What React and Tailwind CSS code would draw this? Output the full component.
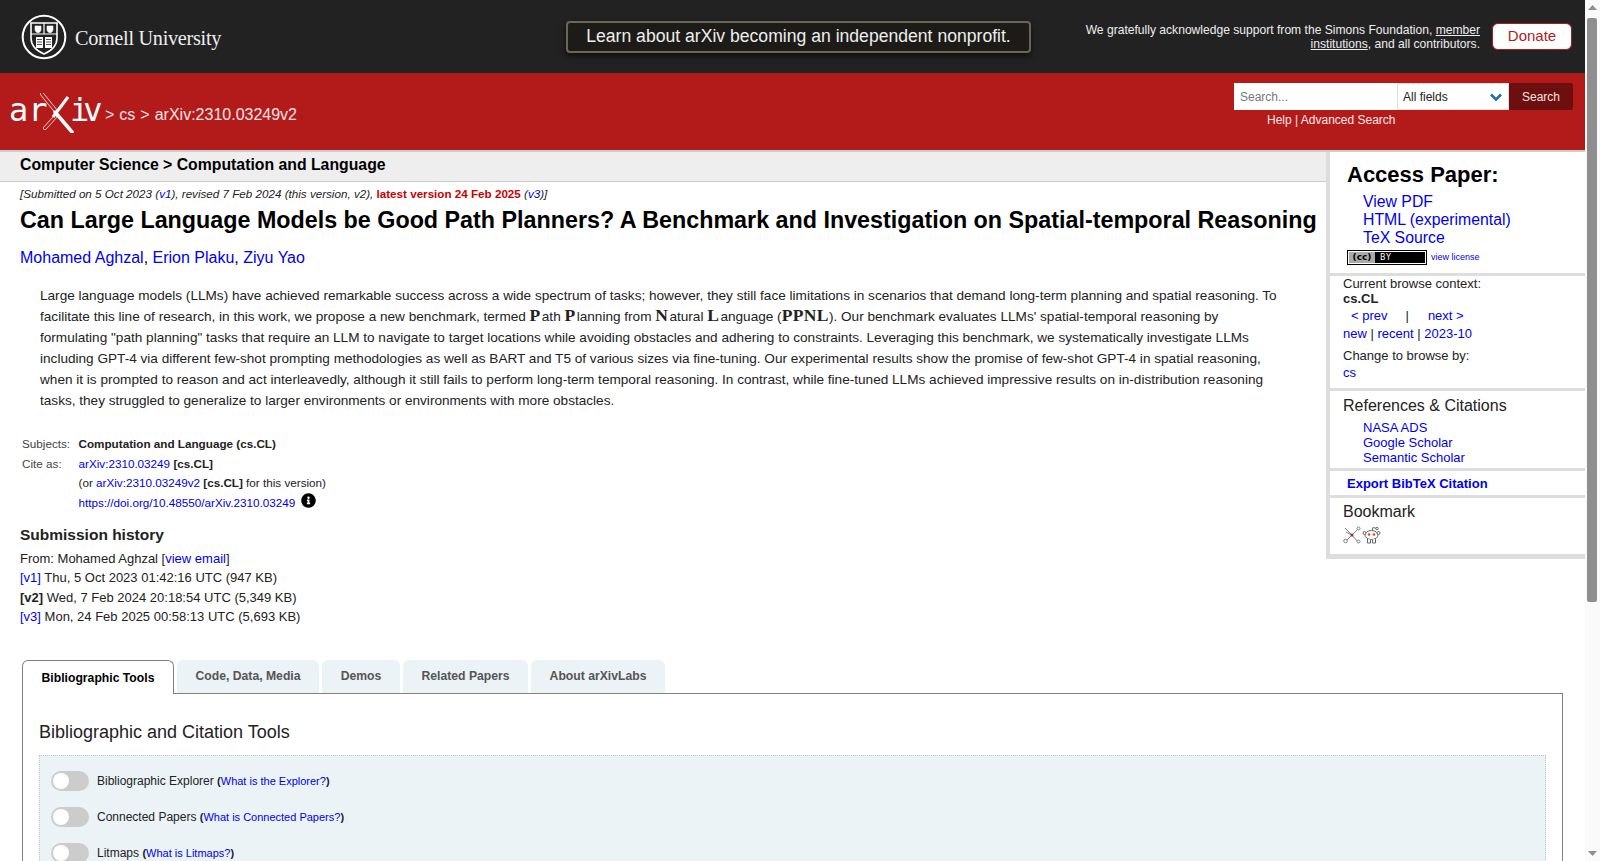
import React from "react";
import { FaInfoCircle } from "react-icons/fa";

const Link = ({ children, className = "" }) => (
  <a href="#" className={`text-[#0000ee] ${className}`}>{children}</a>
);

const CornellSeal = () => (
  <svg width="46" height="46" viewBox="0 0 46 46" fill="none" stroke="#fff">
    <circle cx="23" cy="23" r="21.3" strokeWidth="2" />
    <path d="M10 9h26v15c0 8-6 13-13 16-7-3-13-8-13-16z" strokeWidth="1.6" />
    <path d="M10 20h26M23 9v11" strokeWidth="1.2" />
    <path d="M14 12h6v3.500c0 2-1.500 3-3 3.300-1.500-.3-3-1.300-3-3.300zM26 12h6v3.500c0 2-1.500 3-3 3.300-1.500-.3-3-1.300-3-3.300z" fill="#fff" strokeWidth=".6" />
    <path d="M15 23h7v11h-7zM24 23h7v11h-7z" fill="#fff" stroke="none" />
    <path d="M16 25.500h5M16 28h5M16 30.500h5M25 25.500h5M25 28h5M25 30.500h5" stroke="#222" strokeWidth=".8" />
  </svg>
);

const ArxivLogo = () => (
  <div className="relative h-[40px] w-[90px] shrink-0 text-white">
    <span className="absolute -left-[1px] top-0 font-['DejaVu_Sans_Mono',monospace] text-[32px] leading-[34px]">ar</span>
    <span className="absolute left-[60px] top-0 font-['DejaVu_Sans_Mono',monospace] text-[32px] leading-[34px] tracking-[-6px]">iv</span>
    <svg className="absolute left-0 top-0" width="90" height="40" viewBox="0 0 90 40" fill="none">
      <path d="M32 1l13 16M45 24L35 35" stroke="#f0c9c9" strokeWidth="4" strokeLinecap="round" />
      <path d="M32 1l13 16M45 24L35 35" stroke="#b31b1b" strokeWidth="2.400" strokeLinecap="round" />
      <path d="M45 19l17 20" stroke="#fff" strokeWidth="3.500" strokeLinecap="round" />
      <path d="M58 4L43 24" stroke="#fff" strokeWidth="3" />
    </svg>
  </div>
);

const CcBadge = () => (
  <div className="h-[15px] w-[80px] border border-black bg-white p-[1px] font-['DejaVu_Sans',sans-serif]">
    <div className="flex h-full items-center bg-black">
      <span className="flex h-full w-[26px] items-center justify-center bg-[#aaa] text-[9px] font-bold leading-none text-black">(cc)</span>
      <span className="pl-[5px] text-[8px] leading-none tracking-[1px] text-white">BY</span>
    </div>
  </div>
);

const BookmarkIcons = () => (
  <div className="mt-[5px] flex gap-[1px]">
    <svg width="18" height="18" viewBox="0 0 18 18" fill="none" stroke="#777" strokeWidth=".9">
      <path d="M2 2l7 7 7-7M9 9l-5 5M9 9l6 7M9 9L3 6" />
      <circle cx="15.500" cy="2.500" r="1.500" fill="#fff" />
      <circle cx="2.500" cy="15" r="1.800" fill="#fff" />
      <circle cx="15.500" cy="15.500" r="1.500" fill="#fff" />
      <circle cx="9" cy="9" r="1.500" fill="#a3224d" stroke="none" />
    </svg>
    <svg width="19" height="19" viewBox="0 0 19 19" fill="none" stroke="#666" strokeWidth="1">
      <path d="M10 5l1-3.500 3 .8" />
      <circle cx="15" cy="2.500" r="1.200" />
      <ellipse cx="9.500" cy="9" rx="6.500" ry="4.500" fill="#fff" />
      <circle cx="2.500" cy="7" r="1.500" fill="#fff" />
      <circle cx="16.500" cy="7" r="1.500" fill="#fff" />
      <path d="M5.500 13v4h3v-3.500M13.500 13v4h-3v-3.500" fill="#fff" />
      <circle cx="7" cy="8.500" r="1.300" fill="#f0441c" stroke="none" />
      <circle cx="12" cy="8.500" r="1.300" fill="#f0441c" stroke="none" />
    </svg>
  </div>
);

const Toggle = () => (
  <div className="flex h-[20px] w-[38px] shrink-0 items-center rounded-full bg-[#ccc] pl-[2px]">
    <div className="h-[16px] w-[16px] rounded-full bg-white" />
  </div>
);

const ToolRow = ({ label, link }) => (
  <div className="flex h-[36px] items-center gap-[8px] text-[12px] text-[#222]">
    <Toggle />
    <span>
      {label} <span className="text-[11px] font-bold">(<Link className="font-normal">{link}</Link>)</span>
    </span>
  </div>
);

const Scrollbar = () => (
  <div className="flex h-full w-[15px] shrink-0 flex-col items-center bg-[#fafafa] pr-[1px]">
    <svg className="mt-[5px] shrink-0" width="9" height="5" viewBox="0 0 9 5"><path d="M4.500 0L9 5H0z" fill="#8f8f8f" /></svg>
    <div className="mt-[8px] h-[584px] w-[10px] shrink-0 rounded-[2px] bg-[#8f8f8f]" />
    <div className="flex-1" />
    <svg className="mb-[5px] shrink-0" width="9" height="5" viewBox="0 0 9 5"><path d="M0 0h9L4.500 5z" fill="#8f8f8f" /></svg>
  </div>
);

const MathLetter = ({ children, className = "" }) => (
  <span className={`font-['Liberation_Serif',serif] text-[17.500px] leading-none font-bold ${className}`}>{children}</span>
);

export default function App() {
  return (
    <div className="flex h-[861px] overflow-hidden bg-white font-['Liberation_Sans',Arial,sans-serif] text-black">
      <div className="min-w-0 flex-1">
        {/* cornell banner */}
        <header className="flex h-[73px] items-center bg-[#222] text-white">
          <div className="flex w-[566px] shrink-0 items-center pl-[21px]">
            <CornellSeal />
            <span className="mt-[3px] ml-[8px] font-['Liberation_Serif',serif] text-[20.300px] tracking-[-0.3px] text-[#eee]">Cornell University</span>
          </div>
          <div className="flex h-[32px] w-[465px] shrink-0 items-center justify-center rounded-[4px] border-2 border-[#6b6658] bg-[#1c1b18] text-[17.600px] text-[#eee] shadow-[0_3px_6px_rgba(0,0,0,0.6)]">
            Learn about arXiv becoming an independent nonprofit.
          </div>
          <p className="ml-auto w-[420px] text-right text-[12.100px] leading-[14px] text-[#eee]">
            We gratefully acknowledge support from the Simons Foundation, <span className="underline">member institutions</span>, and all contributors.
          </p>
          <div className="mr-[13px] ml-[12px] flex h-[27px] w-[80px] items-center justify-center rounded-[6px] border border-[#b31b1b] bg-white text-[15px] text-[#b31b1b]">Donate</div>
        </header>

        {/* red bar */}
        <div className="flex h-[79px] border-b-2 border-[#ccc] bg-[#b31b1b] text-white">
          <div className="flex items-start pt-[20px] pl-[10px]">
            <ArxivLogo />
            <div className="mt-[13px] ml-[5px] flex gap-[5px] text-[16px] leading-[18px] text-[#f2e4e4]">
              <span>&gt;</span><span>cs</span><span>&gt;</span><span>arXiv:2310.03249v2</span>
            </div>
          </div>
          <div className="ml-auto mr-[12px] pt-[10px]">
            <div className="flex h-[27px] text-[12px]">
              <div className="flex w-[163px] items-center bg-white pl-[6px] text-[#777]">Search...</div>
              <div className="flex w-[112px] items-center justify-between border border-[#ddd] bg-white pr-[6px] pl-[5px] text-[#222]">
                All fields
                <svg width="12" height="8" viewBox="0 0 12 8" fill="none"><path d="M1 1.500l5 5 5-5" stroke="#1c6ca8" strokeWidth="2.500" /></svg>
              </div>
              <div className="flex w-[64px] items-center justify-center rounded-r-[2px] bg-[#6e0f0f] text-[#f2e4e4]">Search</div>
            </div>
            <div className="mt-[3px] pl-[33px] text-[12px] leading-[14px] text-[#f5e8e8]">
              Help | Advanced Search
            </div>
          </div>
        </div>

        <div className="flex items-start">
          {/* left column */}
          <main className="w-[1326px] shrink-0">
            <div className="flex h-[30px] items-center border-b border-[#ccc] bg-[#eee] pb-[4px] pl-[20px] text-[15.800px] font-bold">
              Computer Science &gt; Computation and Language
            </div>
            <div className="pl-[20px]">
              <p className="mt-[5px] text-[11.650px] leading-[14px] italic text-[#222]">
                [Submitted on 5 Oct 2023 (<Link>v1</Link>), revised 7 Feb 2024 (this version, v2), <span className="font-bold not-italic text-[#c00]">latest version 24 Feb 2025</span> (<Link>v3</Link>)]
              </p>
              <h1 className="mt-[5px] whitespace-nowrap text-[23.300px] leading-[29px] font-bold">
                Can Large Language Models be Good Path Planners? A Benchmark and Investigation on Spatial-temporal Reasoning
              </h1>
              <p className="mt-[14px] text-[16px] leading-[18px]">
                <Link>Mohamed Aghzal</Link>, <Link>Erion Plaku</Link>, <Link>Ziyu Yao</Link>
              </p>
              <p className="mt-[18px] ml-[20px] w-[1240px] text-[13.600px] leading-[21px] text-[#222]">
                Large language models (LLMs) have achieved remarkable success across a wide spectrum of tasks; however, they still face limitations in scenarios that demand long-term planning and spatial reasoning. To facilitate this line of research, in this work, we propose a new benchmark, termed <MathLetter className="mr-[1.500px]">P</MathLetter>ath <MathLetter className="mr-[1.500px]">P</MathLetter>lanning from <MathLetter className="mr-[1.500px]">N</MathLetter>atural <MathLetter className="mr-[1.500px]">L</MathLetter>anguage (<MathLetter className="tracking-[0.4px]">PPNL</MathLetter>). Our benchmark evaluates LLMs' spatial-temporal reasoning by formulating "path planning" tasks that require an LLM to navigate to target locations while avoiding obstacles and adhering to constraints. Leveraging this benchmark, we systematically investigate LLMs including GPT-4 via different few-shot prompting methodologies as well as BART and T5 of various sizes via fine-tuning. Our experimental results show the promise of few-shot GPT-4 in spatial reasoning, when it is prompted to reason and act interleavedly, although it still fails to perform long-term temporal reasoning. In contrast, while fine-tuned LLMs achieved impressive results on in-distribution reasoning tasks, they struggled to generalize to larger environments or environments with more obstacles.
              </p>

              {/* metadata */}
              <div className="mt-[23px] ml-[2px] grid grid-cols-[56.500px_1fr] text-[11.700px] leading-[19.500px] text-[#222]">
                <span className="text-[#444]">Subjects:</span>
                <span className="font-bold">Computation and Language (cs.CL)</span>
                <span className="text-[#444]">Cite as:</span>
                <span><Link>arXiv:2310.03249</Link> <b>[cs.CL]</b></span>
                <span />
                <span>(or <Link>arXiv:2310.03249v2</Link> <b>[cs.CL]</b> for this version)</span>
                <span />
                <span className="flex items-center">
                  <Link>https://doi.org/10.48550/arXiv.2310.03249</Link>
                  <FaInfoCircle className="relative -top-[2px] ml-[6px] text-[15px] text-black" />
                </span>
              </div>

              <h2 className="mt-[14px] text-[15.500px] leading-[18px] font-bold text-[#222]">Submission history</h2>
              <div className="mt-[5px] text-[13px] leading-[19.330px] text-[#222]">
                <div>From: Mohamed Aghzal [<Link>view email</Link>]</div>
                <div><Link>[v1]</Link> Thu, 5 Oct 2023 01:42:16 UTC (947 KB)</div>
                <div><b>[v2]</b> Wed, 7 Feb 2024 20:18:54 UTC (5,349 KB)</div>
                <div><Link>[v3]</Link> Mon, 24 Feb 2025 00:58:13 UTC (5,693 KB)</div>
              </div>
            </div>
          </main>

          {/* sidebar */}
          <aside className="w-[259px] shrink-0 border-b-[5px] border-l-4 border-[#ddd] text-[13px] leading-[15px]">
            <section className="h-[124px] border-b-[3px] border-[#ddd] pt-[9px] pl-[17px]">
              <h2 className="text-[22px] leading-[27px] font-bold">Access Paper:</h2>
              <ul className="mt-[5px] pl-[16px] text-[15.800px] leading-[18px]">
                <li><Link>View PDF</Link></li>
                <li><Link>HTML (experimental)</Link></li>
                <li><Link>TeX Source</Link></li>
              </ul>
              <div className="mt-[3px] flex items-center gap-[4px]">
                <CcBadge />
                <Link className="text-[9px]">view license</Link>
              </div>
            </section>
            <section className="h-[115px] border-b-[3px] border-[#ddd] pl-[13px] text-[#222]">
              <div>Current browse context:</div>
              <div className="font-bold">cs.CL</div>
              <div className="flex h-[18px] items-center pl-[8px]">
                <Link>&lt; prev</Link><span className="ml-[18px]">|</span><Link className="ml-[19px]">next &gt;</Link>
              </div>
              <div className="mt-[2px] h-[18px]"><Link>new</Link> | <Link>recent</Link> | <Link>2023-10</Link></div>
              <div className="mt-[4px]">Change to browse by:</div>
              <div className="mt-[2px]"><Link>cs</Link></div>
            </section>
            <section className="h-[80px] border-b-[3px] border-[#ddd] pt-[6px] pl-[13px] text-[#222]">
              <h3 className="text-[16px] leading-[18px]">References &amp; Citations</h3>
              <ul className="mt-[5px] pl-[20px]">
                <li><Link>NASA ADS</Link></li>
                <li><Link>Google Scholar</Link></li>
                <li><Link>Semantic Scholar</Link></li>
              </ul>
            </section>
            <section className="flex h-[27px] items-center border-b-[3px] border-[#ddd] pl-[17px] font-bold">
              <Link>Export BibTeX Citation</Link>
            </section>
            <section className="h-[56px] pt-[5px] pl-[13px] text-[#222]">
              <h3 className="text-[16px] leading-[18px]">Bookmark</h3>
              <BookmarkIcons />
            </section>
          </aside>
        </div>

        {/* labs tabs */}
        <div className="mt-[34px] ml-[22px] w-[1541px]">
          <div className="flex h-[33px] gap-[3px] text-[12.200px] font-bold text-[#555]">
            <div className="relative z-10 flex h-[34px] w-[152px] items-center justify-center rounded-t-[6px] border border-b-0 border-[#808080] bg-white text-black">Bibliographic Tools</div>
            <div className="flex w-[142px] items-center justify-center rounded-t-[6px] bg-[#ecf3f7] pb-[1px]">Code, Data, Media</div>
            <div className="flex w-[78px] items-center justify-center rounded-t-[6px] bg-[#ecf3f7] pb-[1px]">Demos</div>
            <div className="flex w-[125px] items-center justify-center rounded-t-[6px] bg-[#ecf3f7] pb-[1px]">Related Papers</div>
            <div className="flex w-[134px] items-center justify-center rounded-t-[6px] bg-[#ecf3f7] pb-[1px]">About arXivLabs</div>
          </div>
          <div className="h-[200px] border border-[#808080] px-[16px] pt-[28px]">
            <h2 className="text-[18px] leading-[20px] text-[#222]">Bibliographic and Citation Tools</h2>
            <div className="mt-[13px] h-[160px] border border-dotted border-[#b5c9d5] bg-[#ebf3f7] pt-[7px] pl-[11px]">
              <ToolRow label="Bibliographic Explorer" link="What is the Explorer?" />
              <ToolRow label="Connected Papers" link="What is Connected Papers?" />
              <ToolRow label="Litmaps" link="What is Litmaps?" />
            </div>
          </div>
        </div>
      </div>
      <Scrollbar />
    </div>
  );
}
